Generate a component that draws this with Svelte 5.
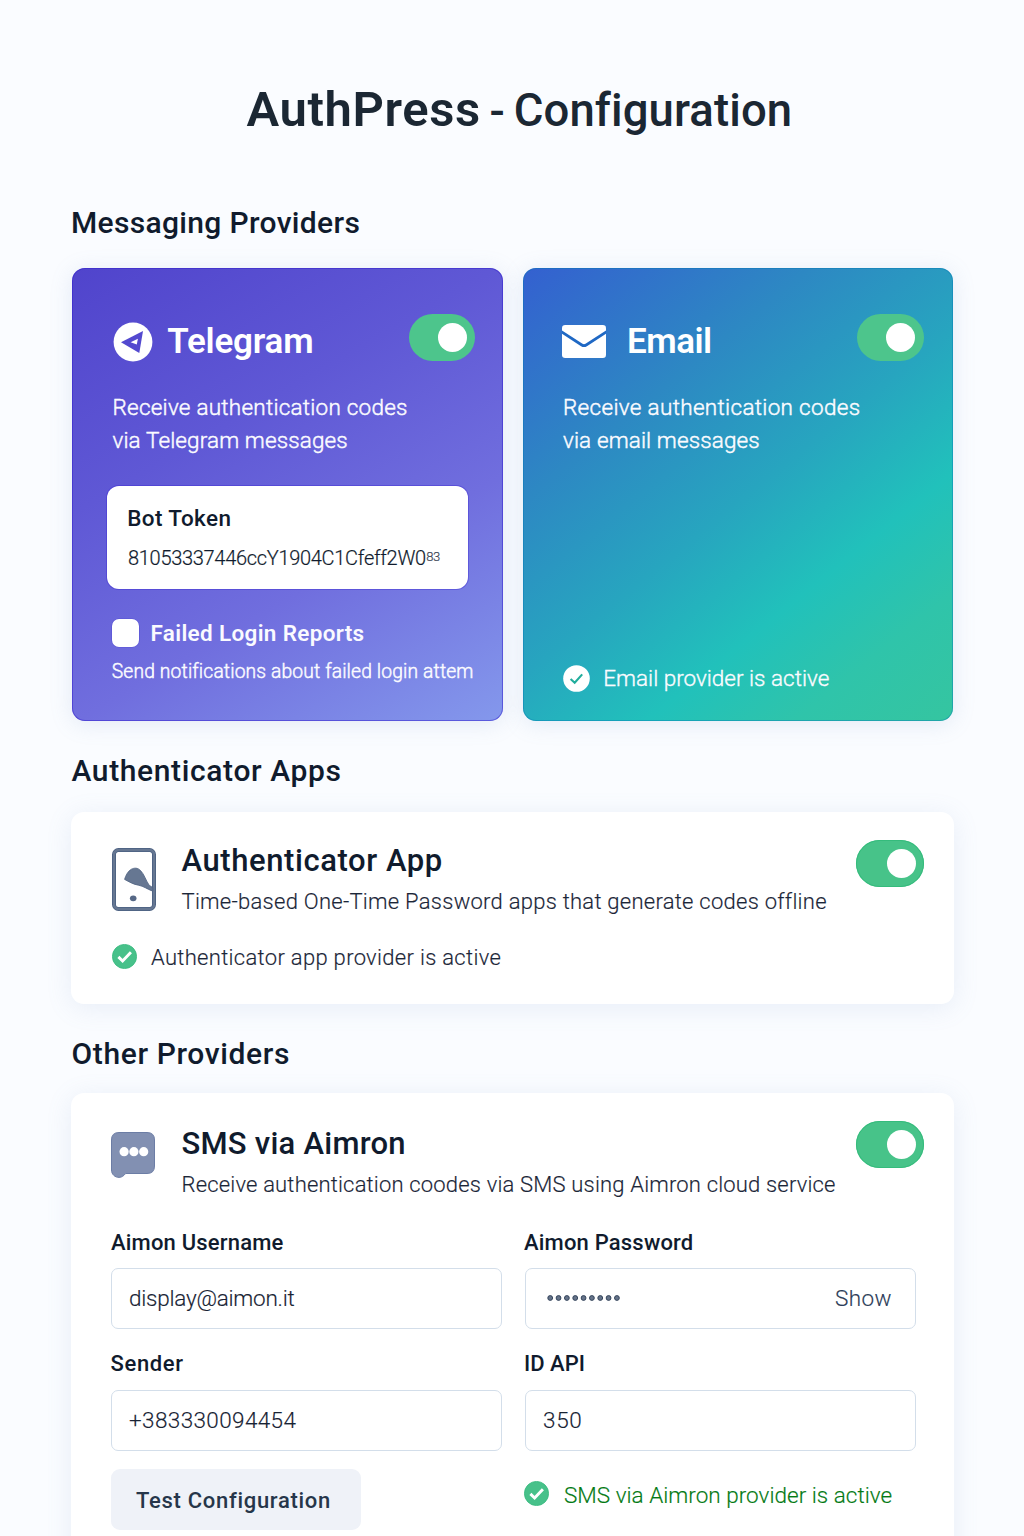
<script>
  let on = $state({ telegram: true, email: true, app: true, sms: true });
  const dots = Array.from({ length: 9 }, (_, i) => 3.2 + i * 8.34);
</script>

{#snippet toggle(key, label)}
  <button class="toggle" class:off={!on[key]} aria-label={label} onclick={() => (on[key] = !on[key])}>
    <span class="knob"></span>
  </button>
{/snippet}

{#snippet check()}
  <svg class="check" viewBox="0 0 25 25" aria-hidden="true">
    <circle cx="12.5" cy="12.5" r="12.1" fill="#47c18a" stroke="#35b97c" stroke-width=".8" />
    <path d="M6.4 12.9 10.6 17 18.9 8.2" fill="none" stroke="#fff" stroke-width="2.9" />
  </svg>
{/snippet}

<main>
  <h1><strong>AuthPress</strong><span class="dash">-</span><span class="sub">Configuration</span></h1>

  <h2 class="h-messaging">Messaging Providers</h2>
  <div class="providers">
    <section class="tile telegram">
      <div class="head">
        <div class="brand">
          <svg class="plane" viewBox="0 0 40 40" aria-hidden="true">
            <circle cx="20" cy="20" r="19.4" fill="#fff" />
            <path d="M8 20.2 30 9 26.3 31Z" fill="#5349cf" />
            <path d="M17.6 20.2 24.9 16.8 23.8 22.5Z" fill="#fff" />
          </svg>
          <h3>Telegram</h3>
        </div>
        {@render toggle('telegram', 'Toggle Telegram')}
      </div>
      <p class="desc">Receive authentication codes<br /><span class="second">via Telegram messages</span></p>
      <div class="token">
        <div class="token-label">Bot Token</div>
        <div class="token-value">81053337446ccY1904C1Cfeff2W0<span class="tail">83</span></div>
      </div>
      <div class="report"><span class="box"></span><span class="report-label">Failed Login Reports</span></div>
      <p class="hint">Send notifications about failed login attem</p>
    </section>

    <section class="tile email">
      <div class="head">
        <div class="brand">
          <svg class="envelope" viewBox="0 0 44 33" aria-hidden="true">
            <rect x="0" y="0" width="44" height="33" rx="3.2" fill="#fff" />
            <path d="M-1 6.4 19.8 20Q22 21.4 24.2 20L45 6.4" fill="none" stroke="#1f68c4" stroke-width="2.7" />
          </svg>
          <h3>Email</h3>
        </div>
        {@render toggle('email', 'Toggle Email')}
      </div>
      <p class="desc">Receive authentication codes<br /><span class="second">via email messages</span></p>
      <div class="tile-status">
        <svg viewBox="0 0 27 27" aria-hidden="true">
          <circle cx="13.5" cy="13.5" r="13.3" fill="#fff" />
          <path d="M7.6 14 11.7 17.8 19.2 9.4" fill="none" stroke="#21ad9c" stroke-width="2.1" />
        </svg>
        <span>Email provider is active</span>
      </div>
    </section>
  </div>

  <h2 class="h-apps">Authenticator Apps</h2>
  <section class="card app">
    <div class="card-head">
      <svg class="phone" viewBox="0 0 44 63" aria-hidden="true">
        <rect x="2" y="2" width="40" height="59" rx="4.5" fill="#fff" stroke="#4a5f80" stroke-width="4" />
        <rect x="2" y="2" width="40" height="59" rx="4.5" fill="none" stroke="#667792" stroke-width="2.4" />
        <path d="M12.6 31.4C13.6 27.6 16 23 19.4 21.2 22.4 19.6 25.8 19.8 28.2 22.2 32.4 26.3 33.8 32.4 36.8 36.6 38 38.2 39.4 38.6 40.8 39.4L40.8 43.2C34.8 41 31.8 38.2 26.4 37.2 21.4 36.4 17 33.8 12.6 31.4Z" fill="#667792" stroke="#4f6282" stroke-width=".8" />
        <ellipse cx="21.2" cy="50.3" rx="3.3" ry="2.9" fill="#566886" />
      </svg>
      <div class="card-text">
        <h3>Authenticator App</h3>
        <p>Time-based One-Time Password apps that generate codes offline</p>
      </div>
      {@render toggle('app', 'Toggle Authenticator App')}
    </div>
    <div class="status">{@render check()}<span>Authenticator app provider is active</span></div>
  </section>

  <h2 class="h-other">Other Providers</h2>
  <section class="card sms">
    <div class="card-head">
      <svg class="bubble" viewBox="0 0 44 46" aria-hidden="true">
        <path d="M8 .5H36Q43.5.5 43.5 8V34Q43.5 41.5 36 41.5H14.6C12.8 43.8 10.8 45.4 8 45.4 4 45.4.5 42.4.5 38V8Q.5.5 8 .5Z" fill="#8290b2" stroke="#6c7da5" />
        <circle cx="13.1" cy="19.7" r="4.6" fill="#fff" />
        <circle cx="22.9" cy="19.7" r="4.6" fill="#fff" />
        <circle cx="32.7" cy="19.7" r="4.6" fill="#fff" />
      </svg>
      <div class="card-text">
        <h3>SMS via Aimron</h3>
        <p>Receive authentication coodes via SMS using Aimron cloud service</p>
      </div>
      {@render toggle('sms', 'Toggle SMS via Aimron')}
    </div>

    <div class="form">
      <div class="field">
        <div class="label">Aimon Username</div>
        <div class="input mail">display@aimon.it</div>
      </div>
      <div class="field">
        <div class="label">Aimon Password</div>
        <div class="input password">
          <svg class="dots" viewBox="0 0 74 8" aria-label="Hidden password">
            {#each dots as x}<circle cx={x} cy="4" r="2.4" />{/each}
          </svg>
          <span class="show">Show</span>
        </div>
      </div>
      <div class="field">
        <div class="label sender">Sender</div>
        <div class="input phone-no">+383330094454</div>
      </div>
      <div class="field">
        <div class="label api-label">ID API</div>
        <div class="input api">350</div>
      </div>
    </div>

    <div class="actions">
      <button class="test">Test Configuration</button>
      <div class="status ok">{@render check()}<span>SMS via Aimron provider is active</span></div>
    </div>
  </section>
</main>

<style>
  :global(body) {
    margin: 0;
    background: #fafcff;
  }
  main {
    box-sizing: border-box;
    width: 1024px;
    height: 1536px;
    overflow: hidden;
    padding: 80px 70.5px 0 71px;
    font-family: Roboto, 'Liberation Sans', sans-serif;
    color: #101b2d;
    white-space: nowrap;
  }
  h1, h2, h3, p {
    margin: 0;
    font-weight: 500;
  }
  h1 {
    display: flex;
    align-items: baseline;
    height: 60px;
    padding-left: 175.5px;
    line-height: 60px;
    color: #1b2733;
  }
  h1 strong {
    font-size: 49px;
    font-weight: 600;
    letter-spacing: 0.6px;
  }
  .dash {
    margin-left: 8.5px;
    font-size: 45px;
  }
  .sub {
    margin-left: 9px;
    font-size: 45.5px;
    letter-spacing: 0.1px;
    font-variant-ligatures: none;
  }
  h2 {
    height: 40px;
    font-size: 30px;
    line-height: 40px;
  }
  .h-messaging { margin: 63px 0 25px 0; letter-spacing: 0.33px; }
  .h-apps { margin: 30px 0 21px 0.5px; letter-spacing: 0.63px; }
  .h-other { margin: 30px 0 19px 0.5px; letter-spacing: 0.62px; }

  .providers {
    display: grid;
    grid-template-columns: 431px 430.5px;
    gap: 20px;
    height: 453px;
    padding-left: 0.5px;
  }
  .tile {
    display: flex;
    flex-direction: column;
    box-sizing: border-box;
    height: 453px;
    border-radius: 13px;
    color: #fbfbff;
  }
  .telegram {
    padding: 46px 27.5px 0 41px;
    background: linear-gradient(150deg, #5044cc 0%, #5f58d5 35%, #706ede 65%, #8498ec 100%);
    box-shadow: inset 0 0 0 1px rgba(50, 30, 205, 0.5), 0 3px 22px rgba(120, 150, 200, 0.18);
  }
  .email {
    padding: 46px 29.5px 28px 39.5px;
    background: linear-gradient(141deg, #3460d0 0%, #2d88c3 29%, #27a5bf 51%, #21c1bb 69%, #2fc4aa 84%, #35c5a0 100%);
    box-shadow: inset 0 0 0 1px rgba(0, 120, 180, 0.4), 0 3px 22px rgba(120, 150, 200, 0.18);
  }
  .head {
    display: flex;
    justify-content: space-between;
    align-items: center;
    height: 47px;
  }
  .brand {
    display: flex;
    align-items: center;
    padding-top: 7px;
  }
  .brand h3 {
    padding-top: 2px;
    font-size: 35px;
    line-height: 42px;
    font-weight: 600;
    letter-spacing: -0.2px;
    color: #fff;
  }
  .plane { width: 40px; height: 40px; margin-top: 1px; }
  .plane + h3 { margin-left: 14.7px; }
  .envelope { width: 44px; height: 33px; }
  .envelope + h3 { margin-left: 21px; letter-spacing: -0.5px; }

  .toggle {
    flex: none;
    box-sizing: border-box;
    width: 66.5px;
    height: 47px;
    padding: 0 8.5px 0 0;
    border: 0;
    border-radius: 24px;
    background: #4dc58c;
    display: flex;
    align-items: center;
    justify-content: flex-end;
  }
  .toggle.off {
    justify-content: flex-start;
    padding: 0 0 0 8.5px;
    background: #b6c0cf;
  }
  .knob {
    width: 29px;
    height: 29px;
    border-radius: 50%;
    background: #fff;
  }

  .desc {
    margin-top: 30px;
    font-size: 22.5px;
    line-height: 33px;
    font-weight: 300;
    letter-spacing: 0.24px;
    -webkit-text-stroke: 0.45px currentColor;
  }
  .telegram .second { letter-spacing: 0.12px; }
  .email .desc { margin-left: 1px; letter-spacing: 0.32px; }
  .email .second { letter-spacing: 0.12px; }

  .token {
    box-sizing: border-box;
    width: 361px;
    height: 103px;
    margin: 29px 0 0 -6px;
    padding: 19px 20px 0;
    border-radius: 12px;
    background: #fff;
    box-shadow: 0 0 0 1px rgba(60, 40, 210, 0.4);
    color: #101b2d;
  }
  .token-label {
    padding-left: 0.7px;
    font-size: 22.5px;
    line-height: 26px;
    font-weight: 500;
    letter-spacing: 0.4px;
  }
  .token-value {
    display: flex;
    margin-top: 14px;
    padding-left: 1.5px;
    font-size: 20px;
    line-height: 26px;
    font-weight: 300;
    letter-spacing: -0.3px;
    -webkit-text-stroke: 0.2px currentColor;
  }
  .tail {
    margin-left: 0.5px;
    font-size: 13px;
    line-height: 24px;
    letter-spacing: -0.4px;
    color: #3b4656;
  }

  .report {
    display: flex;
    align-items: center;
    height: 28px;
    margin: 30px 0 0 -1px;
  }
  .box {
    width: 27px;
    height: 28px;
    border-radius: 7px;
    background: #fff;
    box-shadow: 0 0 0 0.6px rgba(70, 60, 210, 0.5);
  }
  .report-label {
    margin: 0 0 0 12px;
    font-size: 22.5px;
    font-weight: 600;
    letter-spacing: 0.33px;
    color: #fafaff;
  }
  .hint {
    margin: 13px 0 0 -0.7px;
    font-size: 19.3px;
    line-height: 24px;
    font-weight: 300;
    letter-spacing: 0.13px;
    -webkit-text-stroke: 0.45px currentColor;
  }
  .tile-status {
    display: flex;
    align-items: center;
    height: 28px;
    margin: auto 0 1px 1.3px;
    font-size: 22.5px;
    font-weight: 300;
    -webkit-text-stroke: 0.35px currentColor;
  }
  .tile-status svg { width: 27px; height: 27px; margin-right: 13px; }

  .card {
    box-sizing: border-box;
    border-radius: 13px;
    background: #fff;
    box-shadow: 0 4px 26px rgba(120, 150, 200, 0.14);
    padding: 28px 29.5px 0 40.5px;
  }
  .app { height: 192px; }
  .sms { height: 480px; }
  .card-head {
    display: flex;
    align-items: flex-start;
    height: 76px;
  }
  .card-head .toggle { width: 68px; height: 46.5px; margin-left: auto; background: #47c389; box-shadow: inset 0 0 0 1px #35bb7c; }
  .phone { width: 44px; height: 63px; margin: 8px 26px 0 0; }
  .bubble { width: 44px; height: 46px; margin: 11px 26.5px 0 -0.5px; }
  .app .card-text { margin-top: 3px; }
  .sms .card-text { margin-top: 4.5px; }
  .card-text h3 {
    font-size: 31px;
    line-height: 36px;
    letter-spacing: 0.58px;
  }
  .sms h3 { letter-spacing: 0.24px; }
  .card-text p {
    margin-top: 9px;
    font-size: 22px;
    line-height: 28px;
    font-weight: 300;
    letter-spacing: 0.26px;
    color: #1b2638;
    -webkit-text-stroke: 0.15px currentColor;
  }
  .sms .card-text p { letter-spacing: 0.18px; }

  .status {
    display: flex;
    align-items: center;
    height: 28px;
    font-weight: 300;
    color: #1b2638;
    -webkit-text-stroke: 0.15px currentColor;
  }
  .app .status { margin-top: 27px; font-size: 22px; letter-spacing: 0.31px; }
  .check { width: 25px; height: 25px; margin: -2px 14.5px 0 0; }

  .form {
    display: grid;
    grid-template-columns: 391px 391px;
    column-gap: 23px;
    row-gap: 21px;
    margin: 32px 0 0 -0.5px;
  }
  .label {
    font-size: 22px;
    line-height: 28px;
    font-weight: 500;
    letter-spacing: 0.19px;
  }
  .field:nth-child(even) .label { margin-left: -1px; }
  .label.sender { letter-spacing: 0.65px; margin-left: -0.5px; }
  .label.api-label { letter-spacing: 0; }
  .input {
    display: flex;
    align-items: center;
    box-sizing: border-box;
    height: 61px;
    margin-top: 11.5px;
    padding: 0 24px 1px 17px;
    border: 1px solid #d3deea;
    border-radius: 7px;
    font-size: 22.5px;
    font-weight: 300;
    -webkit-text-stroke: 0.15px currentColor;
    color: #182334;
  }
  .field:nth-child(-n + 2) .input { margin-top: 11px; }
  .mail { letter-spacing: -0.24px; }
  .phone-no { letter-spacing: 0.37px; }
  .api { letter-spacing: 0.7px; }
  .dots { width: 74px; height: 8px; margin-left: 4px; fill: #66748a; stroke: #33435a; }
  .show { margin: 0 -1px 0 auto; letter-spacing: 0.46px; color: #2c3c58; }

  .actions {
    display: grid;
    grid-template-columns: 391px 391px;
    column-gap: 23px;
    align-items: start;
    margin: 18.5px 0 0 -0.5px;
  }
  .test {
    width: 250px;
    height: 61px;
    padding: 1px 0 0;
    border: 0;
    border-radius: 9px;
    background: #eff2f8;
    font: 500 22px Roboto, sans-serif;
    letter-spacing: 0.7px;
    text-indent: -5px;
    color: #26364a;
  }
  .ok {
    margin: 11.5px 0 0 -1px;
    font-size: 22.5px;
    letter-spacing: 0.02px;
    color: #047a14;
  }
  .ok :global(.check) { margin: -3px 15px 0 0; }
</style>
